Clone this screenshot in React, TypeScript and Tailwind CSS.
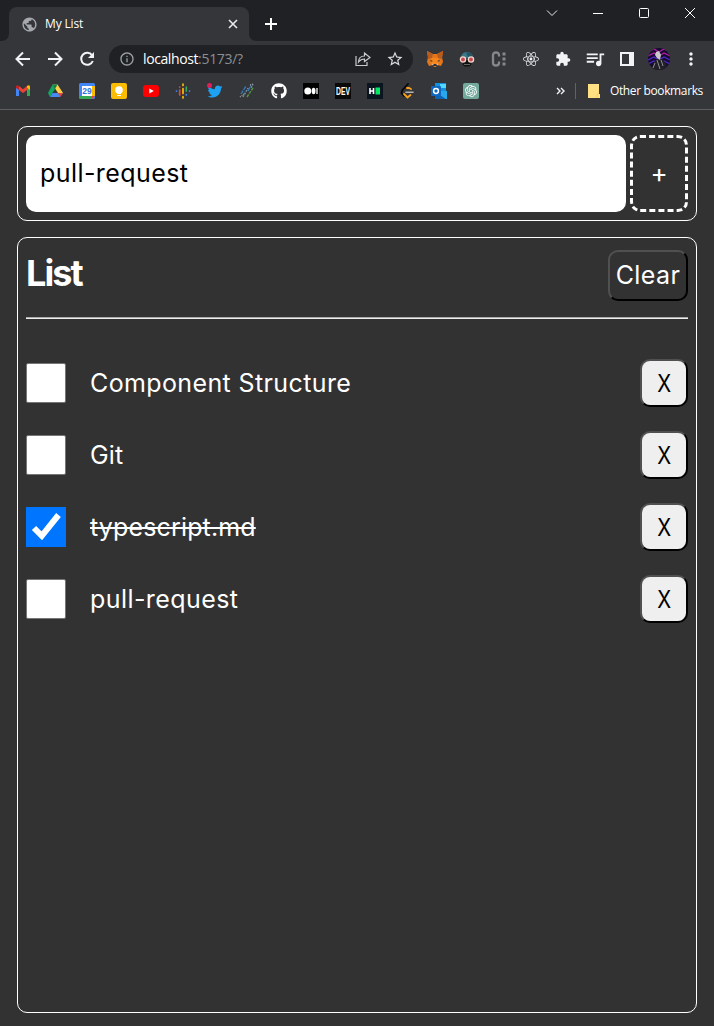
import React, { useState } from "react";
import { FaGithub, FaTwitter, FaReact } from "react-icons/fa";
import {
  MdInfoOutline,
  MdExtension,
  MdPublic,
  MdStarBorder,
  MdMoreVert,
  MdQueueMusic,
} from "react-icons/md";
import { SiOpenai } from "react-icons/si";

type Item = { id: number; title: string; done: boolean; spacing: string };

const initialItems: Item[] = [
  { id: 1, title: "Component Structure", done: false, spacing: "tracking-[0.38px]" },
  { id: 2, title: "Git", done: false, spacing: "tracking-[0.2px]" },
  { id: 3, title: "typescript.md", done: true, spacing: "tracking-[0.15px]" },
  { id: 4, title: "pull-request", done: false, spacing: "tracking-[0.43px]" },
];

function TabStrip() {
  return (
    <div className="flex h-[41px] bg-[#202124] pl-px pt-[7px]">
      <svg className="mt-[26px] h-2 w-2" viewBox="0 0 8 8">
        <path d="M8 0v8H0c5 0 8-3 8-8z" fill="#35363a" />
      </svg>
      <div className="flex h-[34px] w-[240px] items-center rounded-t-lg bg-[#35363a] pl-[12px] pr-[9px]">
        <MdPublic className="h-[17px] w-[17px] text-[#a5a8ad]" />
        <span className="ml-[7px] text-[12px] tracking-[-0.15px] text-white">My List</span>
        <svg className="ml-auto h-[14px] w-[14px]" viewBox="0 0 14 14" fill="none" stroke="#e8eaed" strokeWidth="1.6">
          <path d="M3 3l8 8M11 3l-8 8" />
        </svg>
      </div>
      <svg className="mt-[26px] h-2 w-2" viewBox="0 0 8 8">
        <path d="M0 0v8h8C3 8 0 5 0 0z" fill="#35363a" />
      </svg>
      <svg className="ml-[7px] mt-[10px] h-[14px] w-[14px]" viewBox="0 0 14 14" stroke="#fff" strokeWidth="2">
        <path d="M7 1v12M1 7h12" />
      </svg>
      <div className="ml-auto flex gap-8 pr-[17px]" aria-label="Window controls">
        <svg className="h-[14px] w-[14px]" viewBox="0 0 14 14" fill="none" stroke="#e8eaed">
          <path d="M2 3.5l5 5 5-5" />
        </svg>
        <svg className="h-[14px] w-[14px]" viewBox="0 0 14 14" stroke="#fff">
          <path d="M2 6.5h10" />
        </svg>
        <svg className="h-[14px] w-[14px]" viewBox="0 0 14 14" fill="none" stroke="#fff">
          <rect x="2.5" y="1.5" width="9" height="9" rx="1" />
        </svg>
        <svg className="h-[14px] w-[14px]" viewBox="0 0 14 14" stroke="#fff">
          <path d="M2 1l10 10M12 1L2 11" />
        </svg>
      </div>
    </div>
  );
}

function Fox() {
  return (
    <svg viewBox="0 0 16 16" className="h-4 w-4">
      <path d="M0 0l6 3h4l6-3-1 6 1 5-2 4-4-1-1 2H7l-1-2-4 1-2-4 1-5z" fill="#e2761b" />
      <path d="M0 0l6 3-1 4-4 1zM16 0l-6 3 1 4 4 1z" fill="#b85c1e" />
      <path d="M5 7h6l2 4-3 3H6l-3-3z" fill="#f6851b" />
      <path d="M3 9l3 1-2 .8zM13 9l-3 1 2 .8zM6.5 13h3l.5 2H6z" fill="#26333f" />
      <path d="M4.5 13l2-.5-.5 2zM11.5 13l-2-.5.5 2z" fill="#d7c1b3" />
    </svg>
  );
}

function Goggles() {
  return (
    <svg viewBox="0 0 16 16" className="h-4 w-4">
      <path d="M2 7c0-8 12-8 12 0z" fill="#39788a" />
      <path d="M7 1l5 1 2 4H9z" fill="#235563" />
      <path d="M3 9h10l-1 5-2 1.500H6L4 14z" fill="#111" />
      <circle cx="4" cy="8.500" r="2.600" fill="#c8474c" stroke="#f2d8d0" strokeWidth="1.300" />
      <circle cx="12" cy="8.500" r="2.600" fill="#c8474c" stroke="#f2d8d0" strokeWidth="1.300" />
      <path d="M5.500 13.500h5" stroke="#bbb" strokeDasharray="1 1" />
    </svg>
  );
}

function Avatar() {
  return (
    <svg viewBox="0 0 22 22" className="h-[22px] w-[22px] rounded-full">
      <rect width="22" height="22" fill="#160a30" />
      <g fill="none" strokeWidth="1.3">
        <path d="M0 4l6-3 5 3 5-3 6 3M0 8l6-3 5 3 5-3 6 3" stroke="#b01fa5" />
        <path d="M0 12l6-3 5 3 5-3 6 3M0 16l6-3 5 3 5-3 6 3" stroke="#5128c9" />
      </g>
      <path d="M3 22l3-8 3-3 5 0 4 4 1 7z" fill="#202027" />
      <path d="M8 4l3-1 2 4-1 5-3-2-2-3z" fill="#c9c7cc" />
      <path d="M9 12l3 9M13 12l2 6M7 15l-2 5" stroke="#aaa8ad" strokeWidth=".8" />
    </svg>
  );
}

function Toolbar() {
  return (
    <div className="flex h-[36px] items-center px-[14px] text-[#f1f3f4]">
      <div className="flex gap-[14px]">
        <svg className="h-[18px] w-[18px]" viewBox="0 0 18 18" fill="none" stroke="currentColor" strokeWidth="2">
          <path d="M16 9H3.500M9 2.500L2.500 9 9 15.500" />
        </svg>
        <svg className="h-[18px] w-[18px]" viewBox="0 0 18 18" fill="none" stroke="currentColor" strokeWidth="2">
          <path d="M2 9h12.500M9 2.500L15.500 9 9 15.500" />
        </svg>
        <svg className="h-[18px] w-[18px]" viewBox="0 0 18 18" fill="none" stroke="currentColor" strokeWidth="2">
          <path d="M14 5.200A6 6 0 1 0 14.800 11" />
          <path d="M16 2v6h-6z" fill="currentColor" stroke="none" />
        </svg>
      </div>
      <div className="ml-[13px] flex h-7 w-[304px] items-center rounded-full bg-[#202124] pl-[10px] pr-[9px]">
        <MdInfoOutline className="h-4 w-4 text-[#9aa0a6]" />
        <span className="ml-2 text-[14px] leading-5 tracking-[-0.4px] text-white">
          localhost<span className="tracking-[-0.3px] text-[#8b8f94]">:5173/?</span>
        </span>
        <svg className="ml-auto h-4 w-4" viewBox="0 0 16 16" fill="none" stroke="#c6c9ce" strokeWidth="1.2">
          <path d="M1 5v9.500h11V11M3.500 11c.2-4 2.300-6 6-6V2l5.500 4.500-5.500 4V8C7 8 5 9 3.500 11z" />
        </svg>
        <MdStarBorder className="ml-[15px] h-[18px] w-[18px] text-[#dadce0]" />
      </div>
      <div className="ml-[14px] flex items-center gap-4">
        <Fox />
        <Goggles />
        <svg viewBox="0 0 16 16" className="h-4 w-4" fill="none" stroke="#85878b">
          <path d="M8 5.500V4Q8 1.500 5 1.500T2 4v8q0 2.500 3 2.500T8 12v-1.500" strokeWidth="2.300" />
          <path d="M13 1.500v13" strokeWidth="3" strokeDasharray="3 2" />
        </svg>
        <FaReact className="h-4 w-4" />
        <MdExtension className="h-4 w-4" />
        <MdQueueMusic className="-mx-[3px] h-[22px] w-[22px]" />
        <svg viewBox="0 0 16 16" className="h-4 w-4">
          <path d="M1 1h14v14H1zM3 3v10h7V3z" fill="#f1f3f4" fillRule="evenodd" />
        </svg>
        <div className="-mx-[3px]">
          <Avatar />
        </div>
        <MdMoreVert className="-mx-[2px] h-[20px] w-5" />
      </div>
    </div>
  );
}

function BookmarkIcons() {
  const box = "h-4 w-4 shrink-0";
  return (
    <div className="flex items-center gap-4">
      <svg className={box} viewBox="0 0 16 16">
        <path d="M1 3v10h3V6z" fill="#4285f4" />
        <path d="M15 3v10h-3V6z" fill="#34a853" />
        <path d="M12 5l3 2V4c0-2-2-2-3-1z" fill="#fbbc04" />
        <path d="M4 3l4 3.200L12 3v4l-4 3-4-3z" fill="#ea4335" />
        <path d="M1 4c0-2 2-2 3-1v4L1 5z" fill="#c5221f" />
      </svg>
      <svg className={box} viewBox="0 0 16 16">
        <path d="M5.500 1.500L1 10l2 4 5-8z" fill="#11a861" />
        <path d="M5.500 1.500h5L16 10h-5z" fill="#ffcf48" />
        <path d="M3 14l2.500-4H16l-3 4z" fill="#4688f4" />
        <path d="M5.500 1.500h5L8 6z" fill="#128348" />
        <path d="M11 10h5l-3 4z" fill="#ea4335" />
      </svg>
      <svg className={box} viewBox="0 0 16 16">
        <rect width="16" height="16" rx="1.500" fill="#4285f4" />
        <path d="M13 3h3v10h-3z" fill="#fbbc04" />
        <path d="M0 13h13v3H1z" fill="#34a853" />
        <path d="M13 13h3l-3 3z" fill="#ea4335" />
        <path d="M3 3h10v10H3z" fill="#fff" />
        <text x="8" y="11" textAnchor="middle" fontSize="8.5" fontWeight="700" fontFamily="Liberation Sans, sans-serif" fill="#3474df">29</text>
      </svg>
      <svg className={box} viewBox="0 0 16 16">
        <rect width="16" height="16" rx="2" fill="#fbbc04" />
        <circle cx="8" cy="7" r="3.800" fill="#fff" />
        <path d="M6 9h4v2H6zM6 12h4v1H6z" fill="#fff" />
      </svg>
      <svg className={box} viewBox="0 0 16 16">
        <rect y="2" width="16" height="12" rx="3" fill="#f00" />
        <path d="M6.300 5.500v5l4.500-2.500z" fill="#fff" />
      </svg>
      <svg className={box} viewBox="0 0 16 16" strokeWidth="1.700" strokeLinecap="round">
        <path d="M1.500 8v.1M11.300 11.500v.5" stroke="#4285f4" />
        <path d="M4.700 7v5M4.700 4v.1" stroke="#ea4335" />
        <path d="M8 1v1.500M8 5.500v5M8 13.500V15" stroke="#fbbc04" />
        <path d="M11.300 4v4" stroke="#34a853" />
        <path d="M14.500 8v.1" stroke="#4285f4" />
      </svg>
      <div className="relative h-4 w-4">
        <FaTwitter className="mt-px h-[15px] w-4 text-[#1da1f2]" />
        <span className="absolute left-0 top-0 h-[5px] w-[5px] rounded-full bg-[#e01e5a]" />
      </div>
      <svg className={box} viewBox="0 0 16 16" fill="none" strokeWidth="1.400">
        <path d="M2 11L7 3M9 8l3-6" stroke="#347ab8" strokeDasharray="4 1" />
        <path d="M4 14l5-9M12 5l2-4" stroke="#6b91a8" strokeDasharray="2 1" />
        <path d="M8 14l6-9" stroke="#579143" strokeDasharray="3 1" />
        <path d="M1 14l4-3M11 2l3-1" stroke="#999" strokeDasharray="1 1" />
      </svg>
      <FaGithub className="h-4 w-4 text-white" />
      <svg className={box} viewBox="0 0 16 16">
        <path d="M0 0h16v16H0z" fill="#000" />
        <circle cx="4.800" cy="8" r="3.500" fill="#fff" />
        <ellipse cx="10.600" cy="8" rx="1.900" ry="3.300" fill="#fff" />
        <path d="M14 5v6" stroke="#fff" strokeWidth="1.300" />
      </svg>
      <svg className={box + " overflow-visible"} viewBox="0 0 16 16">
        <path d="M0 0h16v16H0z" fill="#090909" />
        <text transform="translate(8 11.5) scale(.68 1)" textAnchor="middle" fontSize="10" fontWeight="700" fontFamily="Liberation Sans, sans-serif" fill="#fff">DEV</text>
      </svg>
      <svg className={box} viewBox="0 0 16 16">
        <path d="M0 0h16v16H0z" fill="#0b1520" />
        <path d="M3 5v6M6.500 5v6M3 8h4" stroke="#fff" strokeWidth="1.600" />
        <path d="M8.500 4.500H13v7H8.500z" fill="#00ea64" />
      </svg>
      <svg className={box} viewBox="0 0 16 16" fill="none" strokeWidth="1.800" strokeLinecap="round">
        <path d="M9 1L3.500 7 2.500 10 5 13" stroke="#080808" />
        <path d="M12 6L10 5 8 5M5 11l3.500 3.500 3-2.500" stroke="#f9a11b" />
        <path d="M7 9.300h7" stroke="#b3b3b3" strokeWidth="1.600" />
      </svg>
      <svg className={box} viewBox="0 0 16 16">
        <path d="M4 0h11v9H4z" fill="#1490df" />
        <path d="M9 1h6v4H9z" fill="#50d9ff" />
        <path d="M4 8h12v8H4z" fill="#28a8ea" />
        <path d="M4 9l11 7H4z" fill="#0c64b5" />
        <rect y="3" width="10" height="10" rx="1" fill="#0f67c2" />
        <circle cx="5" cy="8" r="2.400" fill="none" stroke="#fff" strokeWidth="1.500" />
      </svg>
      <div className="flex h-4 w-4 items-center justify-center rounded-[2px] bg-[#74aa9c]">
        <SiOpenai className="h-3 w-3 text-white" />
      </div>
    </div>
  );
}

function BookmarksBar() {
  return (
    <div className="flex h-[28px] items-center pl-[15px] pr-[11px]">
      <BookmarkIcons />
      <svg className="ml-auto h-[8px] w-[9px]" viewBox="0 0 9 8" fill="none" stroke="#f1f3f4" strokeWidth="1.400">
        <path d="M1 1l3 3-3 3M5 1l3 3-3 3" />
      </svg>
      <span className="ml-[10px] h-4 w-px bg-[#5f6368]" />
      <svg className="ml-[12px] h-[14px] w-[12px]" viewBox="0 0 12 14">
        <path d="M0 0h11v10h1v4H0z" fill="#ffe082" />
        <path d="M9 14v-4h2" fill="none" stroke="#f1cd61" />
      </svg>
      <span className="ml-[10px] w-[93px] whitespace-nowrap text-[12px] tracking-[-0.37px] text-white">Other bookmarks</span>
    </div>
  );
}

export default function App() {
  const [items, setItems] = useState<Item[]>(initialItems);
  const [draft, setDraft] = useState("pull-request");

  const toggle = (id: number) =>
    setItems(items.map((item) => (item.id === id ? { ...item, done: !item.done } : item)));

  const add = (event: React.FormEvent) => {
    event.preventDefault();
    if (draft.trim()) {
      setItems([...items, { id: Date.now(), title: draft, done: false, spacing: "tracking-[0.4px]" }]);
    }
  };

  return (
    <div className="flex h-[1026px] w-[714px] flex-col overflow-hidden bg-[#323232] font-['Inter',sans-serif] text-[25px] text-white">
      <header className="h-[110px] shrink-0 border-b border-[#5d5e60] bg-[#35363a] font-['Open_Sans',sans-serif]">
        <TabStrip />
        <Toolbar />
        <BookmarksBar />
      </header>
      <main className="flex min-h-0 flex-1 flex-col gap-4 px-[17px] pb-[13px] pt-4">
        <form onSubmit={add} className="flex h-[95px] shrink-0 gap-1 rounded-[10px] border border-white p-2">
          <input
            value={draft}
            onChange={(event) => setDraft(event.target.value)}
            aria-label="New item"
            className="w-[600px] rounded-[10px] bg-white px-[14px] tracking-[0.43px] text-black outline-none"
          />
          <button className="w-[58px] rounded-[10px] border-[3px] border-dashed border-white pb-[2px] text-[26px] leading-none">+</button>
        </form>
        <section className="min-h-0 flex-1 rounded-[10px] border border-white px-2 pt-3">
          <div className="flex h-[51px] items-start justify-between">
            <h1 className="text-[36px] font-bold leading-[46px] tracking-[-1.9px]">List</h1>
            <button
              onClick={() => setItems([])}
              className="h-[51px] w-20 rounded-[10px] border-2 border-b-black border-l-[#505050] border-r-black border-t-[#505050] tracking-[0.4px]"
            >
              Clear
            </button>
          </div>
          <hr className="mt-4 h-[2px] border-0 border-t border-[#aaa] bg-[#eee]" />
          <ul className="mt-10 flex flex-col gap-6">
            {items.map((item) => (
              <li key={item.id} className="flex h-12 items-center">
                <button
                  role="checkbox"
                  aria-checked={item.done}
                  aria-label={item.title}
                  onClick={() => toggle(item.id)}
                  className={
                    item.done
                      ? "h-10 w-10 bg-[#0075ff]"
                      : "h-10 w-10 rounded-[2px] border border-[#767676] bg-white"
                  }
                >
                  {item.done && (
                    <svg viewBox="0 0 40 40" className="h-10 w-10" fill="none" stroke="#fff" strokeWidth="6">
                      <path d="M8 21l7.800 7.800L32.500 8" />
                    </svg>
                  )}
                </button>
                <span className={"ml-6 pt-[2px] " + item.spacing + (item.done ? " line-through decoration-[2px]" : "")}>
                  {item.title}
                </span>
                <button
                  aria-label={"Remove " + item.title}
                  onClick={() => setItems(items.filter((other) => other.id !== item.id))}
                  className="ml-auto h-12 w-12 rounded-[10px] border-2 border-b-black border-l-[#505050] border-r-black border-t-[#505050] bg-[#efefef] pt-px text-[24px] text-black"
                >
                  <span className="inline-block scale-x-[.85]">X</span>
                </button>
              </li>
            ))}
          </ul>
        </section>
      </main>
    </div>
  );
}
